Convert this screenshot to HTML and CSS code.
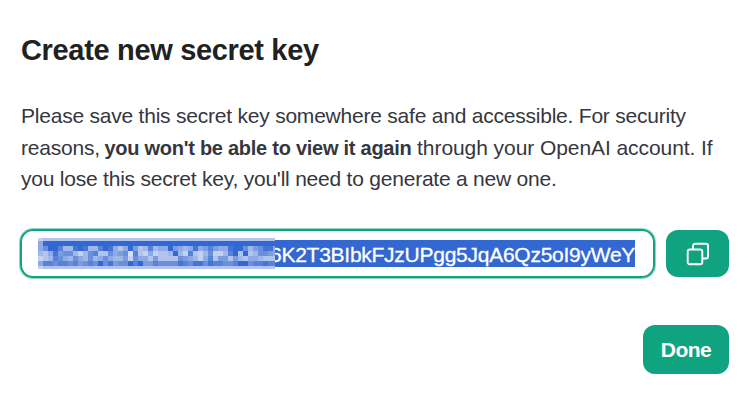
FILE: index.html
```
<!DOCTYPE html>
<html lang="en">
<head>
  <meta charset="UTF-8" />
  <meta name="viewport" content="width=device-width, initial-scale=1.0"/>
  <title>Create new secret key</title>
  <link rel="stylesheet" href="styles.css">
</head>
<body>

  <div class="modal">
    <h1>Create new secret key</h1>

    <p>
      Please save this secret key somewhere safe and accessible. For security<br>
      reasons, <b>you won't be able to view it again</b> <span class="wide">through your OpenAI account. If</span><br>
      you lose this secret key, you'll need to generate a new one.
    </p>

    <div class="key-row">
      <div class="key-field">
        <svg class="mask" id="mask" width="237" height="31" shape-rendering="crispEdges"></svg>
        <span class="key-text">6K2T3BIbkFJzUPgg5JqA6Qz5oI9yWeY</span>
      </div>
      <button class="copy" type="button" aria-label="Copy">
        <svg width="24" height="24" viewBox="0 0 24 24" fill="none" stroke="currentColor" stroke-width="1.9" stroke-linejoin="round">
          <rect x="1.7" y="7.5" width="14.6" height="14.7" rx="2"/>
          <path d="M7 7.5V3.8a2 2 0 0 1 2-2h11a2 2 0 0 1 2 2v10.7a2 2 0 0 1-2 2h-3.7"/>
        </svg>
      </button>
    </div>

    <div class="actions">
      <button class="done" type="button">Done</button>
    </div>
  </div>

  <script src="mask.js"></script>
</body>
</html>
```

FILE: styles.css
```
* {
  box-sizing: border-box;
}
body {
  margin: 0;
  background-color: #fff;
  color: #353740;
  font-family: "Liberation Sans", Arial, sans-serif;
}
.modal {
  padding: 32px 22px 0 21px;
}
h1 {
  margin: 0;
  color: #202123;
  font-size: 29px;
  line-height: 36px;
  font-weight: bold;
  letter-spacing: -0.33px;
}
p {
  margin: 32px 0 0;
  font-size: 21px;
  line-height: 31.5px;
  letter-spacing: -0.22px;
  white-space: nowrap;
}
p b {
  margin-left: -1px;
  font-size: 20px;
  line-height: 1;
  letter-spacing: -0.26px;
}
p .wide {
  letter-spacing: -0.07px;
}
.key-row {
  display: flex;
  gap: 11px;
  align-items: center;
  margin: 34.5px 0 0 -1px;
}
.key-field {
  display: flex;
  align-items: center;
  width: 635px;
  height: 49px;
  padding-left: 16px;
  border: 2px solid #10a37f;
  border-radius: 13px;
  box-shadow: 0 0 0 1px rgba(16, 163, 127, 0.45);
}
.mask {
  flex: none;
  z-index: 1;
}
.key-text {
  width: 365px;
  height: 27px;
  margin-left: -5px;
  background-color: #3367d1;
  color: #fff;
  font-size: 21px;
  line-height: 29px;
  letter-spacing: -0.26px;
  white-space: nowrap;
  -webkit-text-stroke: 0.3px #fff;
}
button {
  padding: 0;
  border: none;
  border-radius: 12px;
  background-color: #10a37f;
  color: #fff;
  cursor: pointer;
}
.copy {
  display: flex;
  align-items: center;
  justify-content: center;
  width: 63px;
  height: 47px;
}
.actions {
  display: flex;
  justify-content: flex-end;
  margin-top: 47px;
}
.done {
  width: 86px;
  height: 49px;
  padding-top: 1px;
  font-family: inherit;
  font-size: 21px;
  font-weight: bold;
  letter-spacing: -0.5px;
}
```

FILE: mask.js
```
// hidden part of the key, 5px blocks, 0 = selection blue, 9 = lightest
const rows = [
  { y: 0, h: 3, v: "8" + "7".repeat(47) },
  { y: 3, h: 5, v: "5" + "0".repeat(47) },
  { y: 8, h: 5, v: "530026610166201575047626550456515424551003643115" },
  { y: 13, h: 5, v: "675143368632773543927858776068278638862070763345" },
  { y: 18, h: 5, v: "876235635636535664835574777734568527447467556777" },
  { y: 23, h: 5, v: "522322324323031433020442333312311312233200322122" },
  { y: 28, h: 3, v: "8" + "7".repeat(47) }
];
const dark = [51, 103, 209];
const light = [214, 223, 246];
let out = "";
for (const row of rows) {
  for (let i = 0; i < row.v.length; i++) {
    const t = Number(row.v[i]) / 9;
    const c = dark.map((d, k) => Math.round(d + (light[k] - d) * t));
    out += `<rect x="${i * 5}" y="${row.y}" width="5" height="${row.h}" fill="rgb(${c})"/>`;
  }
}
document.getElementById("mask").innerHTML = out;
```
